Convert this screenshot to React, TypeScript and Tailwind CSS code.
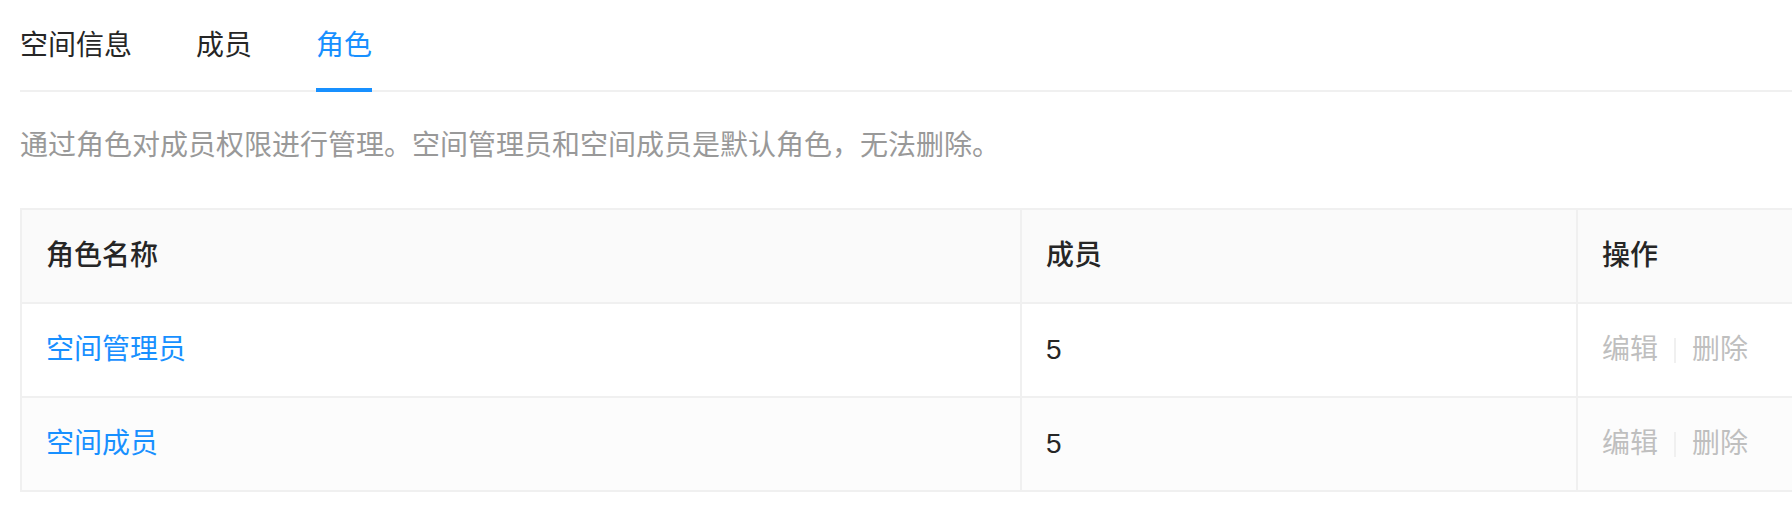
import React from "react";

const tabs = ["空间信息", "成员", "角色"];

const roles = [
    { name: "空间管理员", members: 5 },
    { name: "空间成员", members: 5 },
];

const cell = "px-6 py-6 leading-[44px] border-r-2 border-b-2 border-[#f0f0f0]";

const App = () => {
    const active = 2;

    return <div className="w-full h-[532px] overflow-hidden bg-white pl-[20px] text-[28px] text-[#262626]" style={{ fontFamily: '"Liberation Sans", "Noto Sans CJK SC", sans-serif' }}>
        <div className="flex flex-row border-b-2 border-[#f0f0f0]">
            {tabs.map((tab, i) => (
                <div key={tab} className={`relative pt-6 pb-[22px] mr-16 leading-[44px] ${i === active ? "text-[#1890ff]" : "text-[#262626]"}`}>
                    {tab}
                    {i === active && <div className="absolute left-0 right-0 bottom-[-2px] h-1 bg-[#1890ff]" />}
                </div>
            ))}
        </div>

        <p className="mt-[32px] leading-[44px] text-[#999999]">通过角色对成员权限进行管理。空间管理员和空间成员是默认角色，无法删除。</p>

        <div className="mt-[40px] w-[1900px] grid grid-cols-[1000px_556px_1fr] border-l-2 border-t-2 border-[#f0f0f0]">
            <div className={`${cell} bg-[#fafafa] font-medium`}>角色名称</div>
            <div className={`${cell} bg-[#fafafa] font-medium`}>成员</div>
            <div className={`${cell} bg-[#fafafa] font-medium`}>操作</div>
            {roles.map((role, i) => (
                <React.Fragment key={role.name}>
                    <div className={`${cell} text-[#1890ff] ${i === 1 ? "bg-[#fcfcfc]" : "bg-white"}`}>{role.name}</div>
                    <div className={`${cell} ${i === 1 ? "bg-[#fcfcfc]" : "bg-white"}`}>{role.members}</div>
                    <div className={`${cell} flex flex-row items-center text-[#bfbfbf] ${i === 1 ? "bg-[#fcfcfc]" : "bg-white"}`}>
                        <span>编辑</span>
                        <span className="mx-4 w-[2px] h-[25px] bg-[#f0f0f0]" />
                        <span>删除</span>
                    </div>
                </React.Fragment>
            ))}
        </div>
    </div>
}

export default App
